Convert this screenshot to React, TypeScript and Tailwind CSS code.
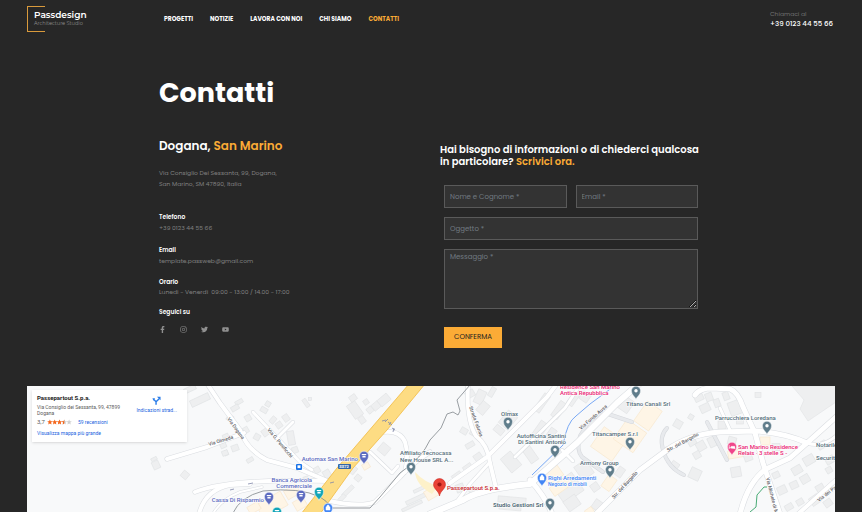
import type { ReactNode } from "react";
import { FaFacebookF, FaInstagram, FaTwitter, FaYoutube } from "react-icons/fa";

const NAV = ["Progetti", "Notizie", "Lavora con noi", "Chi siamo", "Contatti"];

const SOCIAL = [
  { name: "Facebook", icon: FaFacebookF },
  { name: "Instagram", icon: FaInstagram },
  { name: "Twitter", icon: FaTwitter },
  { name: "YouTube", icon: FaYoutube },
];

// map roads: path + width
const ROADS: [string, number][] = [
  ["M208 385 L220 403 L240 430 Q247 450 267 460 L297 468 L330 482", 4],
  ["M253 412 L300 462 L312 470", 3],
  ["M277 438 L293 422", 3],
  ["M167 459 L207 447 L244 433", 4],
  ["M195 492 Q230 478 330 481", 4],
  ["M199 514 Q205 490 230 485 L250 484", 4],
  ["M213 514 Q220 500 240 492 L262 487", 2],
  ["M383 432 Q400 430 405 442 Q409 455 405 472", 4],
  ["M370 452 L392 473 L398 466", 3],
  ["M325 500 Q360 508 375 502 L400 477 Q412 463 430 452", 4],
  ["M468 385 Q466 420 476 436 Q488 445 490 463 L496 488", 4],
  ["M450 483 L487 457 L547 397 L556 385", 4],
  ["M430 514 L463 500 Q480 489 530 484 L577 443 L617 403 L640 383", 6],
  ["M490 462 L470 484 L458 500", 3],
  ["M530 480 Q545 496 552 514", 5],
  ["M515 457 L565 408 L580 385", 3],
  ["M562 450 L573 461", 3],
  ["M596 514 L640 470 L667 450 Q690 434 720 432 L755 431 Q785 433 807 443 L836 417", 5],
  ["M695 395 Q700 388 712 388 L730 389 Q738 392 743 407 L755 433 L763 463 L772 490 L780 514", 5],
  ["M740 514 Q748 482 766 469 L790 458 L807 443", 5],
  ["M807 443 Q822 448 836 436", 3],
  ["M798 514 L836 480", 4],
  ["M720 408 L730 430", 3],
];

const GREY_ROADS = [
  "M603 472 L582 457 Q576 450 580 436 L588 423 Q596 414 608 414 L632 422",
  "M667 428 Q659 436 663 450 Q668 468 684 475",
  "M707 422 L727 460",
];

// cx, cy, width, height, rotation
const BUILDINGS: [number, number, number, number, number][] = [
  [200, 400, 20, 7, -25], [190, 389, 12, 5, -25], [156, 465, 7, 8, -25], [154, 459, 6, 3, -25],
  [185, 475, 7, 7, -50], [223, 445, 6, 6, -25], [226, 453, 4, 5, -25],
  [239, 402, 8, 4, -30], [235, 408, 8, 5, -30], [248, 418, 6, 6, -30], [230, 418, 6, 6, 30],
  [268, 404, 5, 5, 30], [264, 410, 7, 5, 30], [286, 418, 6, 7, -35], [279, 425, 6, 6, -35],
  [266, 432, 8, 7, -35], [273, 420, 5, 7, 40], [291, 438, 7, 14, -10], [295, 450, 6, 6, -20],
  [246, 430, 5, 6, -30], [257, 437, 6, 6, 30], [226, 437, 6, 6, -25], [235, 448, 7, 6, -20],
  [225, 453, 6, 5, -20], [250, 460, 7, 4, -30], [306, 403, 4, 9, -35], [310, 399, 3, 3, 0],
  [355, 410, 10, 16, -35], [362, 420, 6, 7, -35], [353, 398, 7, 6, -35], [366, 402, 5, 5, -35],
  [376, 406, 8, 7, -40], [384, 400, 12, 8, -40], [370, 410, 6, 6, -40], [384, 449, 10, 10, 40],
  [353, 470, 6, 8, 40], [358, 478, 6, 6, 40], [348, 491, 14, 4, -45], [342, 498, 8, 4, -45],
  [317, 470, 6, 6, -30], [327, 474, 7, 8, -30], [306, 479, 5, 5, -20],
  [470, 394, 9, 7, -30], [480, 397, 9, 14, 25], [483, 408, 9, 12, 40], [492, 392, 5, 10, 30],
  [464, 431, 7, 6, 30], [473, 433, 6, 5, 30], [499, 430, 10, 7, 40], [508, 420, 12, 16, 40],
  [470, 445, 9, 5, -30], [478, 457, 8, 7, -35], [468, 468, 9, 7, -35], [457, 476, 10, 6, -35],
  [460, 488, 8, 8, -20], [472, 491, 6, 6, -20], [542, 403, 7, 20, 35], [559, 410, 8, 18, 35],
  [511, 462, 13, 18, -40], [530, 454, 9, 18, -35], [540, 430, 9, 18, 35], [551, 434, 7, 12, 35],
  [585, 397, 9, 9, 35], [573, 399, 7, 14, 35], [625, 404, 14, 14, 35], [512, 500, 28, 6, 5],
  [510, 508, 22, 4, 5], [568, 488, 24, 22, -35], [584, 470, 14, 16, -35], [572, 503, 14, 12, -35],
  [595, 487, 8, 8, -35], [620, 472, 7, 10, 35], [597, 505, 8, 10, 35],
  [699, 398, 9, 6, -25], [709, 397, 7, 8, -20], [705, 408, 10, 8, -25], [717, 403, 6, 8, -20],
  [726, 396, 6, 8, -20], [735, 408, 12, 14, -20], [678, 424, 8, 8, 30], [691, 417, 5, 5, 30],
  [667, 450, 5, 5, 30], [692, 442, 8, 7, -30], [701, 446, 9, 9, -30], [712, 442, 7, 10, -25],
  [722, 425, 8, 8, 0], [740, 421, 7, 6, 0], [695, 474, 11, 11, 25], [736, 472, 10, 10, -10],
  [697, 455, 7, 7, -30], [675, 465, 8, 6, 35], [732, 441, 8, 8, 15], [748, 457, 8, 8, -20],
  [776, 475, 7, 6, -25], [782, 490, 9, 8, -25], [794, 485, 8, 7, -25], [797, 470, 10, 8, -30],
  [809, 460, 11, 9, -30], [805, 479, 9, 8, -30], [820, 488, 8, 7, -30], [822, 445, 9, 7, -30],
  [830, 460, 9, 7, -30], [815, 500, 10, 9, -35], [828, 503, 8, 7, -35], [776, 447, 8, 7, 0],
  [800, 502, 7, 6, -30], [789, 507, 8, 6, -30], [758, 395, 6, 5, 0], [829, 470, 6, 6, -30],
  [418, 498, 26, 4, -25], [412, 506, 22, 3, -25], [420, 489, 14, 3, -25],
];

const SHOPS: [number, number, number, number, number][] = [
  [272, 505, 28, 16, -30], [292, 492, 14, 10, -30], [300, 504, 12, 10, -30], [254, 508, 12, 8, -30],
  [366, 466, 7, 6, -30], [608, 444, 26, 24, 35], [630, 436, 24, 24, 35], [648, 416, 18, 24, 35],
  [553, 475, 18, 12, -35], [561, 486, 22, 10, -35], [609, 483, 10, 14, 35], [735, 454, 14, 8, -10],
  [765, 441, 10, 8, 0], [432, 493, 14, 10, -30], [590, 512, 8, 8, -35],
];

const PINS: { x: number; y: number; color: string; kind: "dot" | "bag" | "bed" | "card" }[] = [
  { x: 508, y: 423, color: "#607d8b", kind: "dot" },
  { x: 411, y: 468, color: "#607d8b", kind: "dot" },
  { x: 555, y: 451, color: "#607d8b", kind: "dot" },
  { x: 636, y: 392, color: "#607d8b", kind: "dot" },
  { x: 630, y: 443, color: "#607d8b", kind: "dot" },
  { x: 610, y: 471, color: "#607d8b", kind: "dot" },
  { x: 550, y: 504, color: "#607d8b", kind: "dot" },
  { x: 767, y: 427, color: "#607d8b", kind: "dot" },
  { x: 542, y: 479, color: "#4285f4", kind: "bag" },
  { x: 364, y: 457, color: "#5c6bc0", kind: "card" },
  { x: 301, y: 496, color: "#5c6bc0", kind: "card" },
  { x: 269, y: 498, color: "#5c6bc0", kind: "card" },
  { x: 319, y: 493, color: "#12a5b8", kind: "card" },
  { x: 277, y: 513, color: "#12a5b8", kind: "card" },
  { x: 328, y: 509, color: "#4285f4", kind: "bag" },
  { x: 732, y: 448, color: "#f0468a", kind: "bed" },
];

const SLATE = "#546e7a";
const INDIGO = "#5c6bc0";
const PINK = "#e91e74";
const STREET = "#5f6368";

const LABELS: { x: number; y: number; text: string; color: string; end?: boolean; small?: boolean; rotate?: number; bold?: boolean }[] = [
  { x: 501, y: 416, text: "Olmax", color: SLATE },
  { x: 566, y: 438, text: "Autofficina Santini", color: SLATE, end: true },
  { x: 566, y: 444, text: "Di Santini Antonio", color: SLATE, end: true },
  { x: 400, y: 455, text: "Affiliato Tecnocasa", color: SLATE },
  { x: 400, y: 462, text: "New House SRL A...", color: SLATE },
  { x: 626, y: 406, text: "Titano Canali Srl", color: SLATE },
  { x: 592, y: 436, text: "Titancamper S.r.l", color: SLATE },
  { x: 580, y: 465, text: "Armony Group", color: SLATE },
  { x: 493, y: 507, text: "Studio Gestioni Srl", color: SLATE, bold: true },
  { x: 715, y: 420, text: "Parrucchiera Loredana", color: SLATE },
  { x: 816, y: 447, text: "Notarile", color: SLATE },
  { x: 816, y: 460, text: "Security", color: SLATE },
  { x: 358, y: 461, text: "Automax San Marino", color: INDIGO, end: true },
  { x: 312, y: 482, text: "Banca Agricola", color: INDIGO, end: true },
  { x: 312, y: 488, text: "Commerciale", color: INDIGO, end: true },
  { x: 264, y: 502, text: "Cassa Di Risparmio", color: INDIGO, end: true },
  { x: 548, y: 480, text: "Righi Arredamenti", color: "#4285f4" },
  { x: 548, y: 486, text: "Negozio di mobili", color: "#4285f4", small: true },
  { x: 447, y: 490, text: "Passepartout S.p.a.", color: "#c5221f" },
  { x: 560, y: 389, text: "Residence San Marino", color: PINK },
  { x: 560, y: 395, text: "Antica Repubblica", color: PINK },
  { x: 738, y: 449, text: "San Marino Residence", color: PINK },
  { x: 738, y: 455, text: "Relais · 3 stelle S -", color: PINK },
  { x: 209, y: 446, text: "Via Olmeda", color: STREET, small: true, rotate: -17 },
  { x: 227, y: 419, text: "Via Dogana", color: STREET, small: true, rotate: 54 },
  { x: 267, y: 430, text: "Via G. Penificchi", color: STREET, small: true, rotate: 50 },
  { x: 469, y: 407, text: "Strada Falunia", color: STREET, small: true, rotate: 70 },
  { x: 581, y: 430, text: "Via Fondo Ausa", color: STREET, small: true, rotate: -41 },
  { x: 614, y: 499, text: "Str. del Bargello", color: STREET, small: true, rotate: -47 },
  { x: 668, y: 452, text: "Str. del Bargello", color: STREET, small: true, rotate: -28 },
  { x: 766, y: 478, text: "Via Michele di Mas", color: STREET, small: true, rotate: 76 },
  { x: 819, y: 502, text: "Via dei Paceri", color: STREET, small: true, rotate: -38 },
];

function Pin({ x, y, color, kind }: (typeof PINS)[number]) {
  return (
    <g transform={`translate(${x} ${y})`}>
      <path d="M0 7.5 C-.6 4.8 -4.6 3.2 -4.6 -1.2 A4.6 4.6 0 0 1 4.6 -1.2 C4.6 3.2 .6 4.8 0 7.5Z" fill={color} stroke="#fff" strokeWidth=".5" />
      {kind === "dot" && <circle cy="-1.2" r="1.7" fill="#fff" />}
      {kind === "bag" && <path d="M-2 -2.2h4v3.2h-4z M-1 -2.2v-.8a1 1 0 0 1 2 0v.8" fill="#fff" stroke="#fff" strokeWidth=".5" />}
      {kind === "bed" && <path d="M-2.8 .8v-3.6M-2.8 -.2h5.6v1M-.8 -1.6h3.4v1.4h-3.4z" fill="#fff" stroke="#fff" strokeWidth=".7" />}
      {kind === "card" && <path d="M-2.2 -3h4.4v1h-4.4z M-1.6 -1.2h3.2v1.6h-3.2z" fill="#fff" />}
    </g>
  );
}

function CityMap() {
  return (
    <svg viewBox="27 386 808 126" className="block h-auto w-full bg-[#f8f9fa] font-[Roboto,sans-serif]" role="img" aria-label="Mappa">
      <g fill="#eeeff0" stroke="#e0e2e4" strokeWidth=".6">
        {BUILDINGS.map(([x, y, w, h, r], i) => (
          <rect key={i} x={x - w / 2} y={y - h / 2} width={w} height={h} transform={`rotate(${r} ${x} ${y})`} />
        ))}
        <path d="M792 386 L804 400 L800 409 L808 421 L836 402 V386Z" />
      </g>
      <g fill="#fef5e6" stroke="#f7e6cc" strokeWidth=".6">
        {SHOPS.map(([x, y, w, h, r], i) => (
          <rect key={i} x={x - w / 2} y={y - h / 2} width={w} height={h} transform={`rotate(${r} ${x} ${y})`} />
        ))}
      </g>
      <path d="M415 472 Q416 485 432 494 L438 486 Q424 482 415 472Z" fill="#fdf1c9" />
      <g fill="none" strokeLinecap="round" strokeLinejoin="round">
        {GREY_ROADS.map((d) => <path key={d} d={d} stroke="#d5d8dc" strokeWidth="4" />)}
        {GREY_ROADS.map((d) => <path key={d} d={d} stroke="#e8eaed" strokeWidth="3" />)}
        {ROADS.map(([d, w]) => <path key={d} d={d} stroke="#dadde1" strokeWidth={w + 1} />)}
        {ROADS.map(([d, w]) => <path key={d} d={d} stroke="#fff" strokeWidth={w} />)}
      </g>
      <path d="M409 384 L337 468 L301 514 H320 L353 468 L387 430 L425 384Z" fill="#fddc83" stroke="#f3c04d" strokeWidth=".9" />
      <g fill="none">
        <path d="M233 513 Q240 497 263 491 Q300 487 320 497 Q326 500 332 508 L370 508 L380 497 L400 473 Q422 458 430 440 L441 428 L447 414 L453 412 L458 415 L460 411 L457 400 L470 385" stroke="#80868b" strokeWidth=".8" />
        <path d="M532 475 L563 445 Q567 422 576 416 L590 404 L613 387" stroke="#79a9f5" strokeWidth="1" />
        <path d="M767 487 L764 487 L757 495 L756 507 L750 512" stroke="#34a165" strokeWidth=".9" />
        <path d="M382 421l4-1m-1 2l3-3 M392 425l-4-3m3 0l-2 3 M395 430l-3-2m1 4l1-4 M330 483l4-1 M248 484l5-1 M230 490l4-1" stroke="#7f86a8" strokeWidth=".8" />
      </g>
      <rect x="338" y="464" width="13" height="5" rx="1" fill="#3367a8" />
      <text x="344" y="468" textAnchor="middle" fill="#fff" className="text-[4px] font-bold">SS72</text>
      <rect x="296" y="464" width="6" height="6" rx="1" fill="#1a73e8" />
      <path d="M297.5 465.3h3v2.8h-3z" fill="#fff" />
      {PINS.map((p) => <Pin key={`${p.x}-${p.y}`} {...p} />)}
      <path d="M439.5 496 C438.5 490.5 433.5 489 433.5 484.5 A6 6 0 0 1 445.5 484.5 C445.5 489 440.5 490.5 439.5 496Z" fill="#ea4335" stroke="#c5221f" strokeWidth=".5" />
      <circle cx="439.5" cy="484.5" r="2.1" fill="#a11712" />
      {LABELS.map((l) => (
        <text
          key={`${l.text}-${l.x}`}
          x={l.x}
          y={l.y}
          fill={l.color}
          stroke="#fff"
          strokeWidth="1"
          paintOrder="stroke"
          textAnchor={l.end ? "end" : "start"}
          transform={l.rotate ? `rotate(${l.rotate} ${l.x} ${l.y})` : undefined}
          className={l.small ? "text-[5px] font-medium" : l.bold ? "text-[6px] font-bold" : "text-[6px] font-medium"}
        >
          {l.text}
        </text>
      ))}
    </svg>
  );
}

function Stars() {
  const star = "M3 .3l.8 1.8 2 .2-1.5 1.3.4 2L3 4.6 1.3 5.6l.4-2L.2 2.3l2-.2z";
  return (
    <svg viewBox="0 0 26 6" className="h-[6px] w-[25px]" role="img" aria-label="3,7 su 5">
      {[0, 1, 2, 3, 4].map((i) => (
        <path key={i} d={star} transform={`translate(${i * 5})`} fill={i < 3 ? "#f4661b" : "#cfcfcf"} />
      ))}
      <path d="M3 .3V4.6L1.3 5.6l.4-2L.2 2.3l2-.2z" transform="translate(15)" fill="#f4661b" />
    </svg>
  );
}

function MapCard() {
  return (
    <div className="absolute top-1 left-[5px] flex h-[52px] w-[155px] justify-between bg-white px-[5px] py-1 font-[Roboto,sans-serif] text-[5px] leading-[6px] text-[#5b5b5b] shadow-sm">
      <div>
        <p className="text-[6px] leading-[8px] font-bold text-[#222]">Passepartout S.p.a.</p>
        <p className="mt-[2px]">Via Consiglio dei Sessanta, 99, 47899<br />Dogana</p>
        <div className="mt-[2px] flex items-center gap-[2px]">
          <span className="text-[6px] leading-[8px]">3,7</span>
          <Stars />
          <a href="#recensioni" className="ml-1 text-[#1a5fe0]">59 recensioni</a>
        </div>
        <a href="#mappa" className="mt-1 block text-[#1a5fe0]">Visualizza mappa più grande</a>
      </div>
      <a href="#indicazioni" className="mt-[2px] mr-[5px] flex flex-col items-center gap-[2px] text-[#1a5fe0]">
        <svg viewBox="0 0 10 10" className="size-[9px]" fill="none" stroke="#2b7de9" strokeWidth="1.6">
          <path d="M4.5 9.8V6.5L8 3M4.5 6.5L2 4" />
          <path d="M5.5 .8h4v4z M.5 2.5h3L1.5 5.2z" fill="#2b7de9" stroke="none" />
        </svg>
        Indicazioni strad...
      </a>
    </div>
  );
}

function Detail({ title, children, className }: { title: string; children: ReactNode; className: string }) {
  return (
    <div className={className}>
      <h3 className="font-semibold text-white">{title}</h3>
      {children}
    </div>
  );
}

const FIELD = "w-full border border-[#5a5a5a] bg-[#333] px-[5px] text-[7px] text-white placeholder:text-[#727a82] placeholder:opacity-100 outline-none";

function ContactForm() {
  return (
    <form className="mt-[17px] mr-[5px] ml-1" onSubmit={(e) => e.preventDefault()}>
      <div className="grid grid-cols-2 gap-[9px]">
        <input type="text" aria-label="Nome e Cognome" placeholder="Nome e Cognome *" className={`${FIELD} h-[23px]`} />
        <input type="email" aria-label="Email" placeholder="Email *" className={`${FIELD} h-[23px]`} />
        <input type="text" aria-label="Oggetto" placeholder="Oggetto *" className={`${FIELD} col-span-2 h-[23px]`} />
        <textarea aria-label="Messaggio" placeholder="Messaggio *" className={`${FIELD} col-span-2 block h-[60px] resize-y py-[3px] leading-[8px]`} />
      </div>
      <button type="submit" className="mt-[18px] h-[21px] bg-[#fbab36] px-[10px] text-[7px] text-[#222]">
        CONFERMA
      </button>
    </form>
  );
}

export default function App() {
  return (
    <div className="min-h-screen bg-[#272727] font-[Poppins,Inter,sans-serif]">
      <header className="flex items-center pt-[6px] pr-[29px] pl-[27px]">
        <a href="#home" className="relative h-[26px] w-[137px] pt-1 pl-[7px] font-[Montserrat,Poppins,sans-serif]">
          <span className="absolute inset-y-0 left-0 w-[18px] border border-r-0 border-[#d99a3c]" />
          <span className="relative block text-[9px] leading-[10px] font-semibold text-white">Passdesign</span>
          <span className="relative block text-[5px] leading-[7px] text-[#909090]">Architecture Studio</span>
        </a>
        <nav className="flex gap-[17px] text-[6px] font-bold text-white uppercase">
          {NAV.map((item) => (
            <a key={item} href={`#${item}`} className={item === "Contatti" ? "text-[#fbab36]" : ""}>
              {item}
            </a>
          ))}
        </nav>
        <div className="ml-auto text-[6px] leading-[9px]">
          <p className="text-[#707070]">Chiamaci al</p>
          <a href="tel:+390123445566" className="block text-[7px] font-medium text-white">+39 0123 44 55 66</a>
        </div>
      </header>

      <main>
        <div className="mx-auto max-w-[544px] pt-[45px]">
          <h1 className="text-[27px] leading-8 font-bold text-white">Contatti</h1>
          <div className="mt-[29px] grid grid-cols-2">
            <section className="text-[6px] leading-[11px] text-[#808080]">
              <h2 className="text-[12px] leading-4 font-semibold text-white">
                Dogana, <span className="text-[#fbab36]">San Marino</span>
              </h2>
              <p className="mt-[14px]">
                Via Consiglio Dei Sessanta, 99, Dogana,<br />
                San Marino, SM 47890, Italia
              </p>
              <Detail title="Telefono" className="mt-[22px]">
                <p>+39 0123 44 55 66</p>
              </Detail>
              <Detail title="Email" className="mt-[11px]">
                <p>template.passweb@gmail.com</p>
              </Detail>
              <Detail title="Orario" className="mt-[10px] leading-[10px]">
                <p className="whitespace-pre">Lunedì - Venerdì  09:00 - 13:00 / 14.00 - 17:00</p>
              </Detail>
              <Detail title="Seguici su" className="mt-[10px]">
                <ul className="mt-2 flex items-center gap-[14px] text-[7px] text-[#909090]">
                  {SOCIAL.map(({ name, icon: Icon }) => (
                    <li key={name}>
                      <a href={`#${name}`} aria-label={name} className="block">
                        <Icon />
                      </a>
                    </li>
                  ))}
                </ul>
              </Detail>
            </section>

            <section className="pt-[6px] pl-[9px]">
              <h2 className="text-[10px] leading-[12px] font-semibold text-white">
                Hai bisogno di informazioni o di chiederci qualcosa in particolare?{" "}
                <span className="text-[#fbab36]">Scrivici ora.</span>
              </h2>
              <ContactForm />
            </section>
          </div>
        </div>

        <section className="relative mx-[27px] mt-[38px] overflow-hidden">
          <CityMap />
          <MapCard />
        </section>
      </main>
    </div>
  );
}
